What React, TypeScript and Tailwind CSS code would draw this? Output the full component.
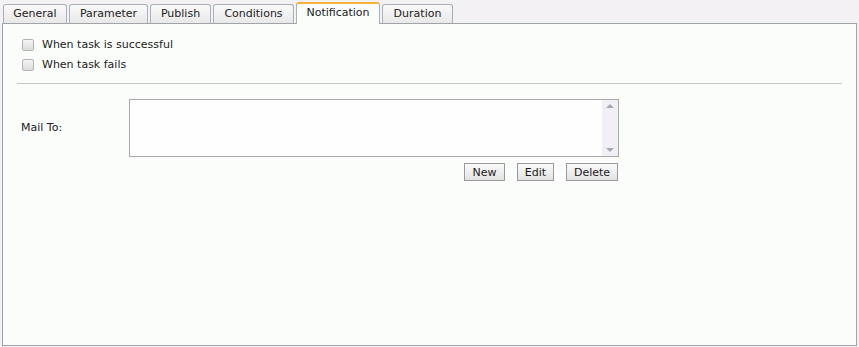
const tabs: [string, string][] = [
  ["General", "w-[64px]"],
  ["Parameter", "w-[79px]"],
  ["Publish", "w-[61px]"],
  ["Conditions", "w-[81px]"],
  ["Notification", "w-[84px]"],
  ["Duration", "w-[71px]"],
];

function Check({ label }: { label: string }) {
  return (
    <label className="flex items-center gap-[8px] h-[20px]">
      <span className="w-[12px] h-[12px] rounded-[2px] border border-[#b4b4b4] bg-gradient-to-b from-[#f4f4f4] to-[#dcdcdc]" />
      <span>{label}</span>
    </label>
  );
}

function Btn({ label, w }: { label: string; w: string }) {
  return (
    <button className={`${w} h-[18px] border border-[#9a9a9a] bg-gradient-to-b from-[#fafafa] to-[#e2e2e2] text-[#1a1a1a] leading-none`}>
      {label}
    </button>
  );
}

export default function App() {
  return (
    <div className="w-[859px] h-[347px] bg-[#f3f1f4] pt-[1px] pl-[2px] pr-[2px] pb-[2px] text-[11px] text-[#222] font-['DejaVu_Sans',Verdana,sans-serif]">
      <div className="flex gap-[2px] pl-[1px] h-[22px] items-end">
        {tabs.map(([t, w]) =>
          t === "Notification" ? (
            <div
              key={t}
              className={`${w} h-[22px] flex items-center justify-center rounded-t-[3px] border border-b-0 border-[#a9b0b8] border-t-2 border-t-[#f4b33a] bg-[#fbfdfb] relative z-10 mb-[-1px] pb-[1px]`}
            >
              {t}
            </div>
          ) : (
            <div
              key={t}
              className={`${w} h-[19px] flex items-center justify-center rounded-t-[3px] border border-b-0 border-[#a9b0b8] bg-gradient-to-b from-[#fafafa] to-[#e8e8e8]`}
            >
              {t}
            </div>
          )
        )}
      </div>
      <div className="h-[323px] border border-[#9ea4aa] bg-[#fbfdfb] pt-[11px] px-[14px]">
        <div className="pl-[5px]">
          <Check label="When task is successful" />
          <Check label="When task fails" />
        </div>
        <div className="mt-[8px] border-t border-[#c4c6c6]" />
        <div className="flex mt-[15px]">
          <div className="w-[112px] pl-[4px] h-[58px] flex items-center">Mail To:</div>
          <div className="w-[490px]">
            <div className="h-[58px] border border-[#a8a8a8] bg-[#fdfefd] flex justify-end">
              <div className="w-[16px] bg-[#f1eff3] flex flex-col items-center justify-between py-[4px]">
                <span className="w-0 h-0 border-x-[4px] border-x-transparent border-b-[4px] border-b-[#a8a8a8]" />
                <span className="w-0 h-0 border-x-[4px] border-x-transparent border-t-[4px] border-t-[#a8a8a8]" />
              </div>
            </div>
            <div className="flex justify-end gap-[12px] mt-[6px] pr-[1px]">
              <Btn label="New" w="w-[41px]" />
              <Btn label="Edit" w="w-[37px]" />
              <Btn label="Delete" w="w-[52px]" />
            </div>
          </div>
        </div>
      </div>
    </div>
  );
}
